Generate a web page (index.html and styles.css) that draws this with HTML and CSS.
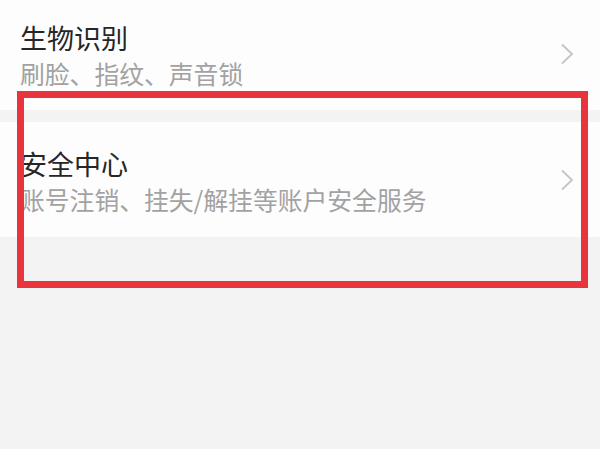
FILE: index.html
```html
<!DOCTYPE html>
<html lang="zh-CN">
<head>
<meta charset="utf-8">
<link rel="stylesheet" href="styles.css">
</head>
<body>
<div class="page">
  <div class="section section-bio">
    <div class="row">
      <div class="text">
        <div class="title">生物识别</div>
        <div class="sub">刷脸、指纹、声音锁</div>
      </div>
      <svg class="chev" width="14" height="22" viewBox="0 0 14 22"><polyline points="2,1.5 12,11 2,20.5" fill="none" stroke="#c4c4c4" stroke-width="1.8"/></svg>
    </div>
  </div>
  <div class="section section-safe">
    <div class="row">
      <div class="text">
        <div class="title">安全中心</div>
        <div class="sub">账号注销、挂失/解挂等账户安全服务</div>
      </div>
      <svg class="chev" width="14" height="22" viewBox="0 0 14 22"><polyline points="2,1.5 12,11 2,20.5" fill="none" stroke="#c4c4c4" stroke-width="1.8"/></svg>
    </div>
  </div>
  <div class="highlight"></div>
</div>
</body>
</html>
```
FILE: styles.css
```css
html, body {
  margin: 0;
  padding: 0;
  background: #f3f3f3;
}
body {
  font-family: "Noto Sans CJK SC", "Noto Sans", sans-serif;
}
.page {
  position: relative;
  width: 600px;
  height: 449px;
  overflow: hidden;
}
.section {
  background: #fdfdfd;
  box-sizing: border-box;
  padding-left: 20px;
  padding-right: 26px;
}
.section-bio {
  height: 110px;
  padding-top: 22px;
}
.section-safe {
  margin-top: 12px;
  height: 115px;
  padding-top: 26px;
}
.row {
  display: flex;
  align-items: center;
  justify-content: space-between;
}
.title {
  font-size: 27px;
  line-height: 32px;
  color: #262626;
}
.sub {
  margin-top: 4px;
  font-size: 24.8px;
  line-height: 30px;
  color: #a2a2a2;
}
.chev {
  display: block;
  margin-top: -2px;
}
.highlight {
  position: absolute;
  left: 17px;
  top: 91px;
  width: 571px;
  height: 197px;
  box-sizing: border-box;
  border: 7px solid #e8343c;
}
```
